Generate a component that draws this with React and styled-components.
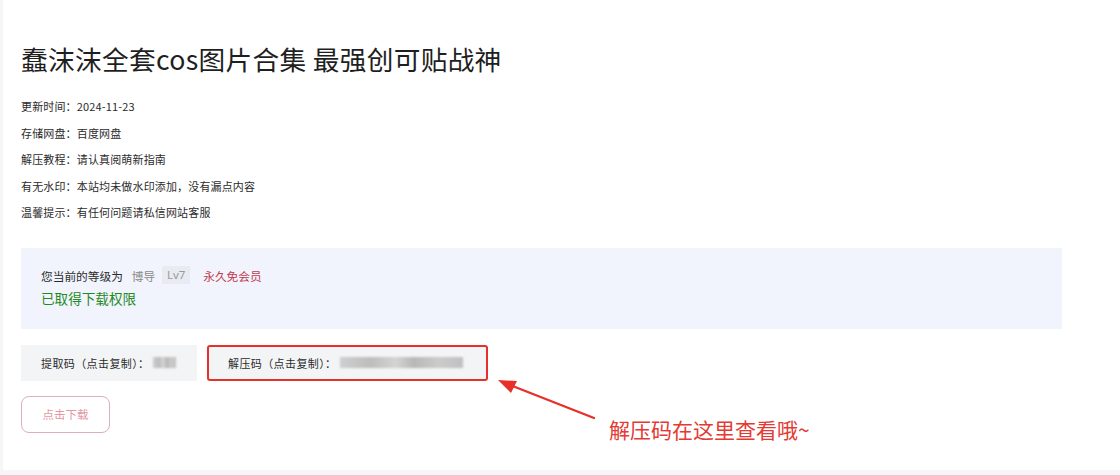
import React from "react";
import styled, { createGlobalStyle } from "styled-components";

const GlobalStyle = createGlobalStyle`
  html, body {
    margin: 0;
    padding: 0;
    background: #f5f6f8;
  }
  body {
    font-family: "Noto Sans CJK SC", "Noto Sans", sans-serif;
    color: #333;
  }
`;

const info = [
  ["更新时间", "2024-11-23"],
  ["存储网盘", "百度网盘"],
  ["解压教程", "请认真阅萌新指南"],
  ["有无水印", "本站均未做水印添加，没有漏点内容"],
  ["温馨提示", "有任何问题请私信网站客服"],
];

function App() {
  return (
    <>
      <GlobalStyle />
      <Card>
        <Title>蠢沫沫全套cos图片合集 最强创可贴战神</Title>
        <InfoList>
          {info.map(([k, v]) => (
            <InfoItem key={k}>
              {k}：{v}
            </InfoItem>
          ))}
        </InfoList>

        <LevelBox>
          <LevelLine>
            您当前的等级为
            <Rank>博导</Rank>
            <LvBadge>Lv7</LvBadge>
            <Vip>永久免会员</Vip>
          </LevelLine>
          <Granted>已取得下载权限</Granted>
        </LevelBox>

        <CodeRow>
          <CodeBox width={176}>
            提取码（点击复制）：
            <Blurred width={23} />
          </CodeBox>
          <CodeBox width={281} highlighted>
            解压码（点击复制）：
            <Blurred width={123} />
          </CodeBox>
        </CodeRow>

        <DownloadButton>点击下载</DownloadButton>

        <Note>
          <svg width="100" height="44" viewBox="0 0 100 44">
            <line x1="96" y1="40" x2="12" y2="7" stroke="#e8302a" strokeWidth="2.4" strokeLinecap="round" />
            <polygon points="0,2 19,3 13,15" fill="#e8302a" />
          </svg>
          <NoteText>解压码在这里查看哦~</NoteText>
        </Note>
      </Card>
    </>
  );
}

export default App;

const Card = styled.div`
  position: relative;
  box-sizing: border-box;
  margin-left: 3px;
  height: 470px;
  background: #fff;
  padding: 40px 58px 0 18px;
  display: flex;
  flex-direction: column;
  align-items: flex-start;
`;

const Title = styled.h1`
  margin: 0;
  font-size: 26.7px;
  line-height: 38px;
  font-weight: 400;
  color: #1f1f1f;
  letter-spacing: 0.3px;
`;

const InfoList = styled.div`
  margin-top: 15px;
  display: flex;
  flex-direction: column;
`;

const InfoItem = styled.div`
  font-size: 11px;
  line-height: 26.5px;
  color: #2b2b2b;
  letter-spacing: 0.15px;
`;

const LevelBox = styled.div`
  align-self: stretch;
  margin-top: 22px;
  height: 81px;
  box-sizing: border-box;
  background: #f1f4fd;
  padding: 18px 20px 0;
  display: flex;
  flex-direction: column;
`;

const LevelLine = styled.div`
  display: flex;
  align-items: center;
  font-size: 11.7px;
  line-height: 19px;
  color: #2b2b2b;
`;

const Rank = styled.span`
  color: #8a8a8a;
  margin-left: 9px;
`;

const LvBadge = styled.span`
  margin-left: 7px;
  width: 28px;
  text-align: center;
  background: #e8ebf1;
  color: #9a9a9a;
  line-height: 18px;
  font-size: 11.5px;
  font-family: "Noto Sans", sans-serif;
`;

const Vip = styled.span`
  color: #c13a4c;
  margin-left: 13px;
`;

const Granted = styled.div`
  margin-top: 3px;
  font-size: 13.6px;
  line-height: 20px;
  color: #1f8a24;
`;

const CodeRow = styled.div`
  margin-top: 16px;
  display: flex;
  gap: 10px;
`;

const CodeBox = styled.div`
  display: flex;
  align-items: center;
  box-sizing: border-box;
  width: ${(p) => p.width}px;
  height: 36px;
  background: #f3f4f6;
  font-size: 11px;
  letter-spacing: 0.4px;
  color: #2b2b2b;
  padding-left: ${(p) => (p.highlighted ? "19px" : "20px")};
  border: ${(p) => (p.highlighted ? "2px solid #e5302b" : "none")};
  border-radius: ${(p) => (p.highlighted ? "3px" : "0")};
`;

const Blurred = styled.span`
  display: inline-block;
  width: ${(p) => p.width}px;
  height: 11px;
  margin-left: 3px;
  background: linear-gradient(
    90deg,
    #cfcfcf 0%,
    #bdbdbd 25%,
    #d4d4d4 45%,
    #b8b8b8 60%,
    #cbcbcb 80%,
    #c0c0c0 100%
  );
  filter: blur(1px);
`;

const DownloadButton = styled.button`
  margin-top: 15px;
  width: 89px;
  height: 37px;
  background: #fff;
  border: 1px solid #dbb0b7;
  border-radius: 8px;
  color: #e397a5;
  font-family: "Noto Sans CJK SC", sans-serif;
  font-size: 11.5px;
  cursor: pointer;
`;

const Note = styled.div`
  position: absolute;
  left: 495px;
  top: 378px;
  display: flex;
  align-items: flex-start;
`;

const NoteText = styled.span`
  margin-top: 36px;
  margin-left: 11px;
  font-size: 21px;
  line-height: 30px;
  color: #e33a33;
  white-space: nowrap;
`;
